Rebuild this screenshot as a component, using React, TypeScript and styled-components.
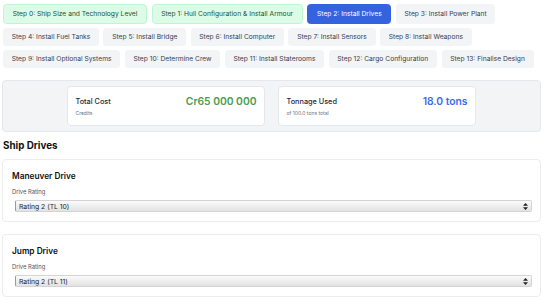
import styled, { createGlobalStyle } from 'styled-components'

const GlobalStyle = createGlobalStyle`
  body {
    margin: 0;
    background: #fff;
    font-family: Inter, 'Noto Sans', sans-serif;
    color: #111827;
  }
`

// ページ全体
const Page = styled.div`
  padding: 4px 4px 0 2px;
`

// ステップのナビゲーション
const StepNav = styled.nav`
  display: flex;
  flex-wrap: wrap;
  gap: 4px 4.5px;
  margin-left: 1px;
`

type StepState = 'done' | 'current' | 'todo'

const StepButton = styled.button<{ $state: StepState }>`
  font-family: Inter, sans-serif;
  font-size: 6.7px;
  line-height: 10px;
  padding: 4px 8.7px;
  border-radius: 3.5px;
  cursor: pointer;
  border: ${({ $state }) => ($state === 'todo' ? 'none' : '1px solid')};
  border-color: ${({ $state }) => ($state === 'done' ? '#bbf7d0' : '#3563e0')};
  background: ${({ $state }) =>
    $state === 'done' ? '#dcfce7' : $state === 'current' ? '#3563e0' : '#f3f4f6'};
  color: ${({ $state }) =>
    $state === 'done' ? '#1f5130' : $state === 'current' ? '#fff' : '#374151'};
`

// 合計パネル
const StatsPanel = styled.section`
  margin-top: 12px;
  display: flex;
  justify-content: center;
  gap: 13px;
  padding: 5px 0;
  background: #f3f4f6;
  border: 1px solid #e5e7eb;
  border-radius: 4px;
`

const StatCard = styled.div`
  width: 198px;
  box-sizing: border-box;
  padding: 8px 7.5px 8px 7.5px;
  background: #fff;
  border: 1px solid #e5e7eb;
  border-radius: 4px;
`

const StatRow = styled.div`
  display: flex;
  justify-content: space-between;
  align-items: center;
  height: 12px;
`

const StatTitle = styled.span`
  font-size: 7.3px;
  font-weight: 500;
  color: #1f2937;
`

const StatValue = styled.span<{ $color: string }>`
  font-size: 10.3px;
  font-weight: 600;
  color: ${({ $color }) => $color};
`

const StatNote = styled.div`
  margin-top: 3px;
  font-size: 5px;
  line-height: 7px;
  color: #6b7280;
`

const SectionTitle = styled.h2`
  margin: 7px 0 6px 1px;
  font-size: 9.8px;
  line-height: 14px;
  font-weight: 700;
  color: #111;
`

// ドライブのカード
const DriveCard = styled.div`
  padding: 10px 8.5px 8.5px 9px;
  border: 1px solid #ececec;
  border-radius: 4px;
  background: #fff;
  & + & {
    margin-top: 12.5px;
  }
`

const DriveTitle = styled.h3`
  margin: 0;
  font-size: 8.3px;
  line-height: 12px;
  font-weight: 600;
  color: #111;
`

const FieldLabel = styled.label`
  display: block;
  margin-top: 5.5px;
  font-size: 5.8px;
  line-height: 8px;
  color: #4b5563;
`

const SelectWrap = styled.div`
  position: relative;
  margin: 4.5px 0 0 3px;
`

const Select = styled.select`
  appearance: none;
  display: block;
  width: 100%;
  height: 12px;
  padding: 0 0 0 3px;
  font-family: Inter, sans-serif;
  font-size: 6.8px;
  color: #1f1f1f;
  border: 1px solid #d4d4d4;
  border-left-color: #9a9a9a;
  border-radius: 2px;
  background: linear-gradient(#fbfbfb, #e2e2e2);
  outline: none;
`

const Arrows = styled.svg`
  position: absolute;
  right: 4px;
  top: 2.5px;
  pointer-events: none;
`

const steps = [
  'Step 0: Ship Size and Technology Level',
  'Step 1: Hull Configuration & Install Armour',
  'Step 2: Install Drives',
  'Step 3: Install Power Plant',
  'Step 4: Install Fuel Tanks',
  'Step 5: Install Bridge',
  'Step 6: Install Computer',
  'Step 7: Install Sensors',
  'Step 8: Install Weapons',
  'Step 9: Install Optional Systems',
  'Step 10: Determine Crew',
  'Step 11: Install Staterooms',
  'Step 12: Cargo Configuration',
  'Step 13: Finalise Design',
]

const current = 2

const drives = [
  { name: 'Maneuver Drive', value: 'Rating 2 (TL 10)' },
  { name: 'Jump Drive', value: 'Rating 2 (TL 11)' },
]

const App = () => {
  return (
    <Page>
      <GlobalStyle />
      <StepNav>
        {steps.map((s, i) => (
          <StepButton key={s} $state={i < current ? 'done' : i === current ? 'current' : 'todo'}>
            {s}
          </StepButton>
        ))}
      </StepNav>

      <StatsPanel>
        <StatCard>
          <StatRow>
            <StatTitle>Total Cost</StatTitle>
            <StatValue $color="#4a9e4f">Cr65 000 000</StatValue>
          </StatRow>
          <StatNote>Credits</StatNote>
        </StatCard>
        <StatCard>
          <StatRow>
            <StatTitle>Tonnage Used</StatTitle>
            <StatValue $color="#3b6de8">18.0 tons</StatValue>
          </StatRow>
          <StatNote>of 100.0 tons total</StatNote>
        </StatCard>
      </StatsPanel>

      <SectionTitle>Ship Drives</SectionTitle>

      {drives.map((d) => (
        <DriveCard key={d.name}>
          <DriveTitle>{d.name}</DriveTitle>
          <FieldLabel>Drive Rating</FieldLabel>
          <SelectWrap>
            <Select defaultValue={d.value}>
              <option>{d.value}</option>
            </Select>
            <Arrows width="5" height="7" viewBox="0 0 5 7">
              <path d="M2.5 0 L5 2.8 H0 Z M2.5 7 L5 4.2 H0 Z" fill="#222" />
            </Arrows>
          </SelectWrap>
        </DriveCard>
      ))}
    </Page>
  )
}

export default App
